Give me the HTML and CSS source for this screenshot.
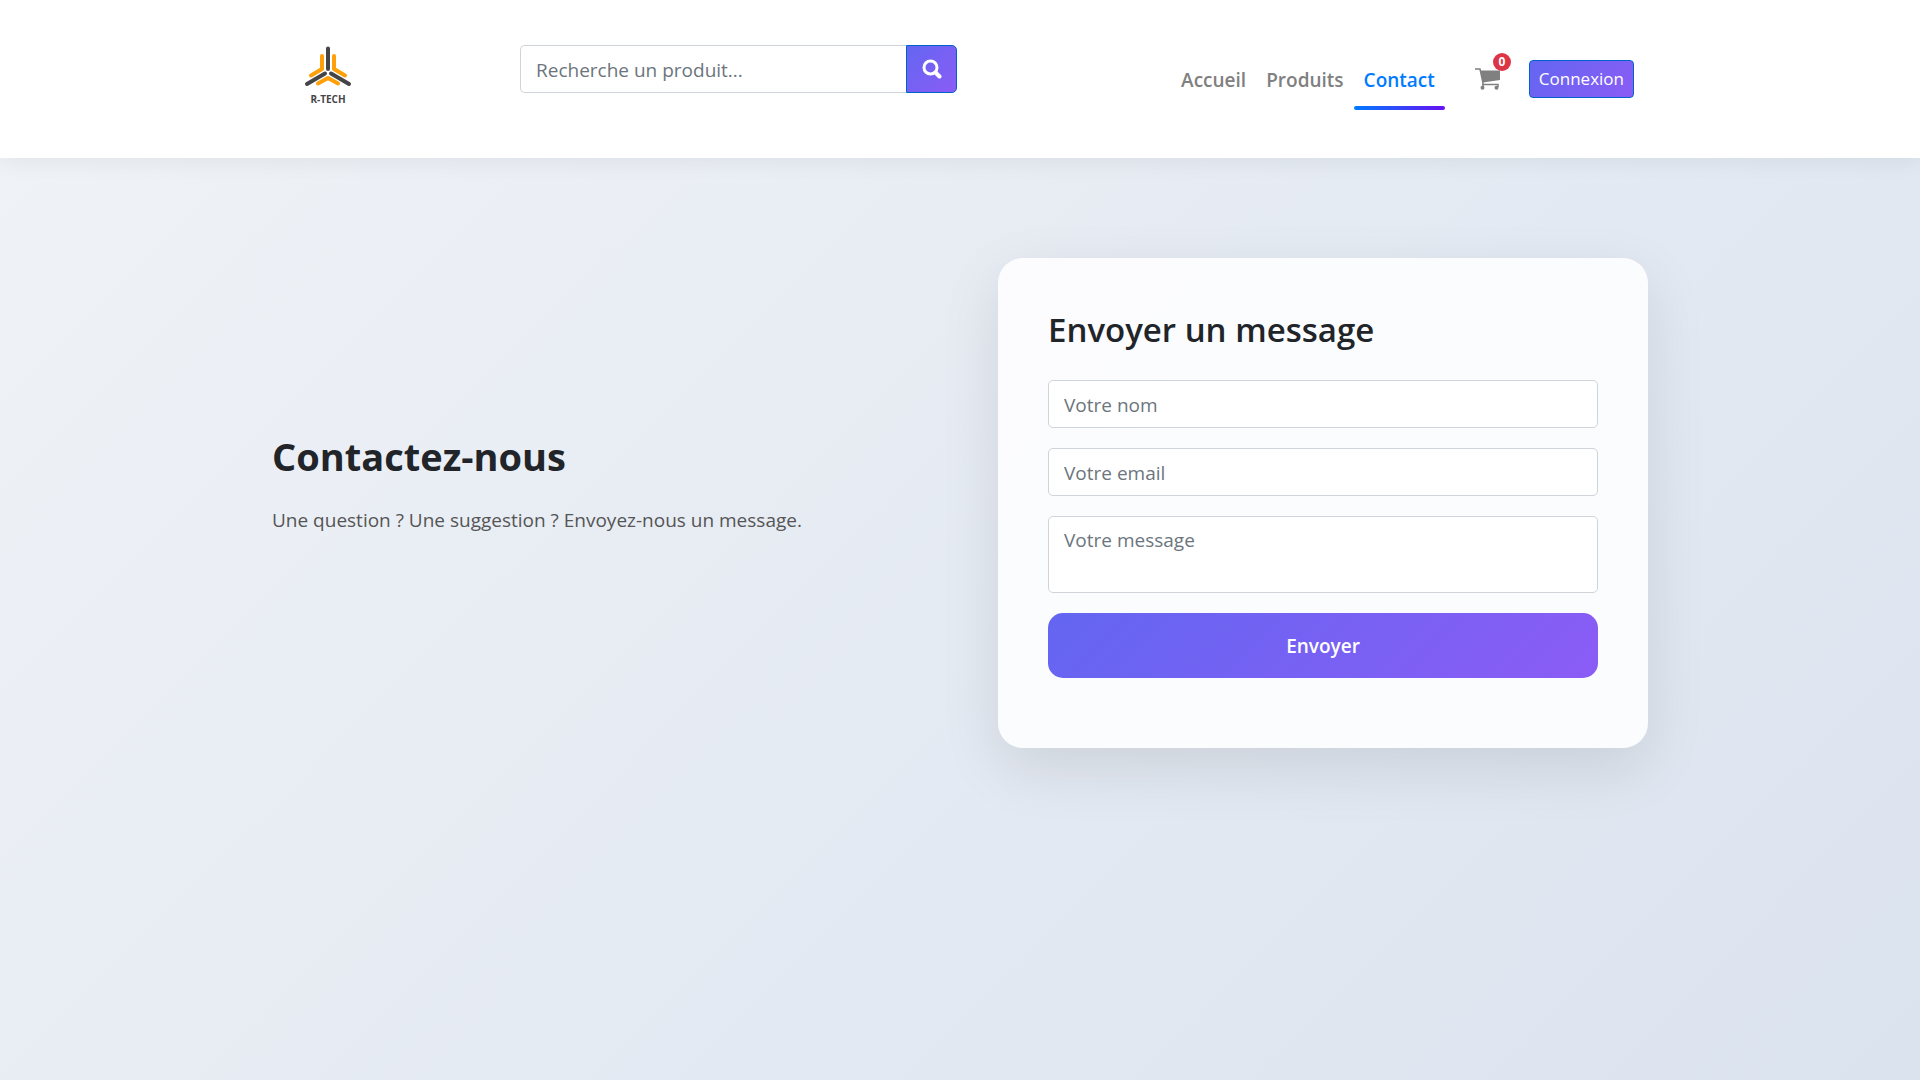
FILE: index.html
```html
<!DOCTYPE html>
<html lang="fr">
<head>
<meta charset="utf-8">
<meta name="viewport" content="width=device-width, initial-scale=1">
<title>R-TECH – Contact</title>
<link rel="stylesheet" href="styles.css">
</head>
<body>
<header class="site-header">
  <div class="container header-row">
    <a class="brand" href="#" aria-label="R-TECH">
      <svg class="brand-mark" viewBox="0 0 48 60" aria-hidden="true">
        <g fill="none" stroke-width="4" stroke-linecap="round" stroke-linejoin="round">
          <path stroke="#454547" d="M24 3.500V24M21 28.500L3 39M27 28.500L45 39"/>
          <path stroke="#ff9f0a" d="M18 11V24L7 30.500M30 11V24L41 30.500M14 38.500L24 33L34 38.500"/>
        </g>
        <text class="brand-text" x="24" y="58" text-anchor="middle">R-TECH</text>
      </svg>
    </a>
    <form class="search">
      <input class="field search-field" type="search" aria-label="Recherche" placeholder="Recherche un produit...">
      <button class="search-button" type="submit" aria-label="Rechercher">
        <svg width="20" height="20" viewBox="0 0 20 20" fill="none" stroke="#fff" stroke-linecap="round" aria-hidden="true">
          <circle cx="8.500" cy="8.500" r="6.500" stroke-width="3"/><path stroke-width="4" d="M13.500 13.500L17.500 17.500"/>
        </svg>
      </button>
    </form>
    <nav class="nav">
      <a class="nav-link" href="#">Accueil</a>
      <a class="nav-link" href="#">Produits</a>
      <a class="nav-link active" href="#">Contact</a>
      <a class="cart" href="#" aria-label="Panier">
        <svg width="26" height="22" viewBox="0 0 26 22" aria-hidden="true">
          <g fill="#808080">
            <path d="M5.500 2.500H25V12L8 14.500Z"/><circle cx="7.500" cy="19.800" r="2"/><circle cx="21.500" cy="19.800" r="2"/>
          </g>
          <path fill="none" stroke="#808080" stroke-width="1.500" d="M0 1H5L8 15V19M7 16.500H23V19"/>
        </svg>
        <span class="badge">0</span>
      </a>
      <button class="login" type="button">Connexion</button>
    </nav>
  </div>
</header>
<main class="container contact">
  <section class="intro">
    <h1 class="intro-title">Contactez-nous</h1>
    <p class="intro-text">Une question ? Une suggestion ? Envoyez-nous un message.</p>
  </section>
  <section class="card">
    <h2 class="card-title">Envoyer un message</h2>
    <form class="contact-form">
      <input class="field" type="text" aria-label="Votre nom" placeholder="Votre nom">
      <input class="field" type="email" aria-label="Votre email" placeholder="Votre email">
      <textarea class="field message" aria-label="Votre message" placeholder="Votre message"></textarea>
      <button class="submit" type="submit">Envoyer</button>
    </form>
  </section>
</main>
</body>
</html>
```
FILE: styles.css
```css
* { box-sizing: border-box; }

body {
  margin: 0;
  min-height: 100vh;
  font-family: "Open Sans", "Noto Sans", sans-serif;
  font-size: 19px;
  line-height: 30px;
  color: #212529;
  background: linear-gradient(135deg, #f0f3f7, #dbe3ef);
}

button, input, textarea { font: inherit; }
button { cursor: pointer; color: #fff; background: linear-gradient(135deg, #6366f1, #8b5cf6); }
a { text-decoration: none; }

.container {
  width: 100%;
  max-width: 1424px;
  margin: 0 auto;
  padding: 0 24px;
}

.site-header {
  padding: 45px 0;
  background: #fff;
  box-shadow: 0 4px 20px rgba(0, 0, 0, 0.06);
}

.header-row {
  display: grid;
  grid-template-columns: 248px 437px 1fr;
  align-items: start;
  min-height: 68px;
  padding-right: 38px;
}

.brand { padding-left: 32px; }
.brand-mark { display: block; width: 48px; height: 60px; }
.brand-text { font-size: 10px; font-weight: 700; fill: #454547; }

.field {
  width: 100%;
  height: 48px;
  padding: 9px 15px 7px;
  border: 1px solid #ced4da;
  border-radius: 5px;
  background: #fff;
  color: #495057;
}
.field::placeholder { color: #6c757d; opacity: 1; }

.search { display: flex; }
.search-field { flex: 1; border-right: 0; border-radius: 5px 0 0 5px; }
.search-button {
  display: grid;
  place-items: center;
  width: 51px;
  padding: 0;
  border: 1px solid #0062cc;
  border-radius: 0 5px 5px 0;
}

.nav {
  display: flex;
  align-items: center;
  justify-content: flex-end;
  min-height: 68px;
}
.nav-link {
  position: relative;
  padding: 11px 10px 9px;
  font-weight: 600;
  color: #808080;
}
.nav-link.active { color: #007bff; }
.nav-link.active::after {
  content: "";
  position: absolute;
  right: 0;
  bottom: -6px;
  left: 0;
  height: 4px;
  border-radius: 2px;
  background: linear-gradient(90deg, #007bff, #6610f2);
}
.cart { position: relative; margin: 0 28px 0 30px; }
.cart svg { display: block; }
.badge {
  position: absolute;
  top: -15px;
  right: -10px;
  width: 18px;
  height: 18px;
  border-radius: 9px;
  background: #dc3545;
  color: #fff;
  font-size: 12px;
  font-weight: 700;
  line-height: 18px;
  text-align: center;
}
.login {
  height: 38px;
  padding: 0 9px;
  border: 1px solid #0062cc;
  border-radius: 4px;
  font-size: 17px;
}

.contact {
  display: grid;
  grid-template-columns: 1fr 1fr;
  gap: 76px;
  align-items: center;
  padding-top: 100px;
  padding-bottom: 100px;
}
.intro-title { margin: 0 0 25px; font-size: 38px; line-height: 48px; font-weight: 700; }
.intro-text { margin: 0 0 39px; color: #555; }

.card {
  padding: 50px 50px 70px;
  border-radius: 25px;
  background: rgba(255, 255, 255, 0.85);
  box-shadow: 0 20px 60px rgba(0, 0, 0, 0.1);
}
.card-title { margin: 0 0 28px; font-size: 33px; line-height: 44px; font-weight: 600; }
.contact-form { display: grid; gap: 20px; }
.message { display: block; height: 77px; padding-top: 8px; resize: none; }
.submit { height: 65px; border: 0; border-radius: 15px; font-weight: 600; }
```
